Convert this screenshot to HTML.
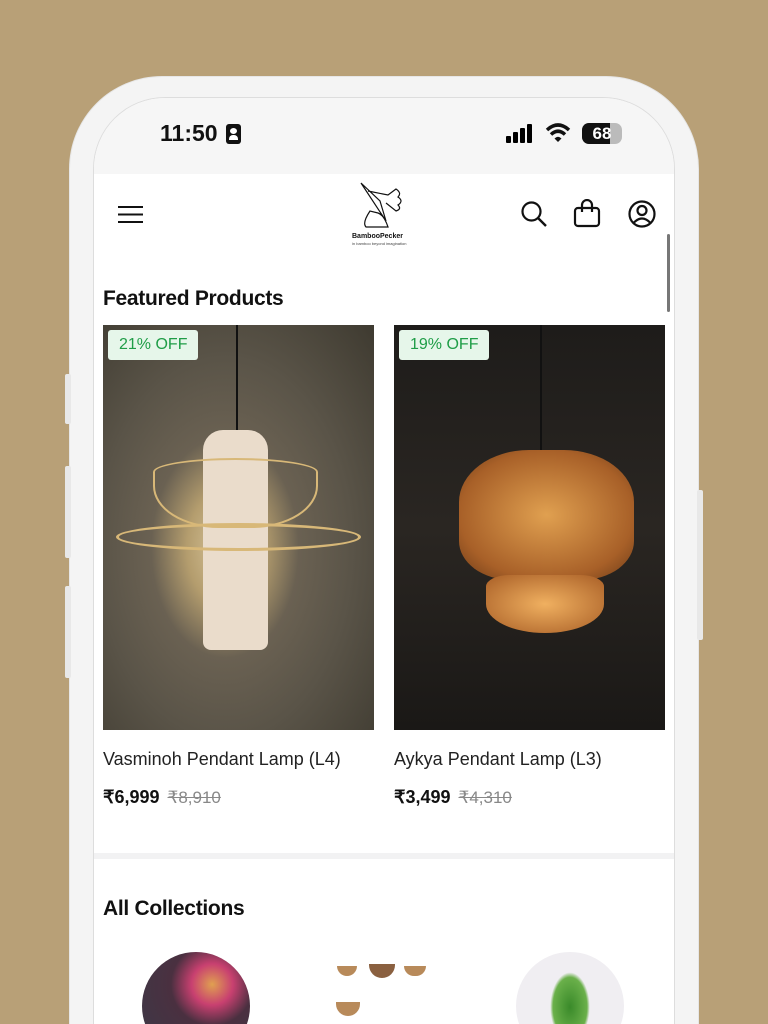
<!DOCTYPE html>
<html><head><meta charset="utf-8"><style>
*{margin:0;padding:0;box-sizing:border-box}
html,body{width:768px;height:1024px;overflow:hidden}
body{background:#b8a077;position:relative;font-family:"Liberation Sans",sans-serif;color:#111}
.frame{position:absolute;left:70px;top:77px;width:628px;height:947px;background:#f4f4f4;border-radius:92px 92px 0 0;box-shadow:0 0 0 1px #e6e6e6}
.btn{position:absolute;background:#e8e8e8;width:6px;border-radius:2px}
.screen{position:absolute;left:93px;top:97px;width:582px;height:927px;background:#fff;border-radius:72px 72px 0 0;overflow:hidden;border:1px solid #ddd;border-bottom:none}
.status{position:absolute;left:0;top:0;width:100%;height:76px;background:#f6f6f6}
.abs{position:absolute}
.badge{position:absolute;left:5px;top:5px;background:#e6f6ea;color:#1f9d47;font-size:16px;padding:6px 11px;border-radius:3px}
.name{font-size:18px;color:#222}
.price{font-size:18px;font-weight:bold}
.old{font-size:17px;color:#888;text-decoration:line-through;margin-left:8px;font-weight:normal}
h2{font-size:21px;font-weight:bold;letter-spacing:-0.3px}
</style></head><body>
<div class="frame"></div>
<div class="btn" style="left:65px;top:374px;height:50px"></div>
<div class="btn" style="left:65px;top:466px;height:92px"></div>
<div class="btn" style="left:65px;top:586px;height:92px"></div>
<div class="btn" style="left:697px;top:490px;height:150px"></div>
<div class="screen">
 <div class="status">
  <div class="abs" style="left:66px;top:22px;font-size:23px;font-weight:bold">11:50</div>
  <div class="abs" style="left:132px;top:26px;width:15px;height:20px;background:#111;border-radius:3px"><div style="position:absolute;left:4px;top:4px;width:7px;height:6px;background:#fff;border-radius:50%"></div><div style="position:absolute;left:3px;top:11px;width:9px;height:5px;background:#fff;border-radius:4px 4px 0 0"></div></div>
  <svg class="abs" style="left:412px;top:26px" width="32" height="20"><rect x="0" y="12" width="5" height="7" rx="1"/><rect x="7" y="8" width="5" height="11" rx="1"/><rect x="14" y="4" width="5" height="15" rx="1"/><rect x="21" y="0" width="5" height="19" rx="1"/></svg>
  <svg class="abs" style="left:451px;top:24px" width="26" height="22"><path d="M2 8 Q13 -2 24 8" stroke="#111" stroke-width="3.5" fill="none"/><path d="M6 12.5 Q13 6 20 12.5" stroke="#111" stroke-width="3.5" fill="none"/><path d="M9.5 16.5 L13 20 L16.5 16.5 Q13 13 9.5 16.5Z" fill="#111"/></svg>
  <div class="abs" style="left:488px;top:25px;width:40px;height:21px;background:#bbb;border-radius:7px;overflow:hidden"><div style="width:28px;height:21px;background:#111"></div><div style="position:absolute;left:0;top:0;width:40px;text-align:center;color:#fff;font-weight:bold;font-size:17px;line-height:21px">68</div></div>
 </div>
 <svg class="abs" style="left:24px;top:107px" width="26" height="20"><path d="M0 2H25M0 9.5H25M0 17H25" stroke="#111" stroke-width="2"/></svg>
 <svg class="abs" style="left:264px;top:83px" width="60" height="50"><path d="M3 2 L28 40 L22 20 Z M10 10 L30 14 L38 8 Q44 12 40 16 Q46 20 40 24 Q44 28 38 30 L28 22 M12 30 Q4 42 8 46 L30 46 Q26 34 20 32 Z" stroke="#111" fill="none" stroke-width="1.2"/></svg>
 <div class="abs" style="left:258px;top:135px;font-size:7px;font-weight:bold">BambooPecker</div>
 <div class="abs" style="left:258px;top:143px;font-size:4px;color:#444">in bamboo beyond imagination</div>
 <svg class="abs" style="left:426px;top:102px" width="30" height="30"><circle cx="11.5" cy="11.5" r="9" stroke="#111" stroke-width="2.2" fill="none"/><path d="M18 18L26 26" stroke="#111" stroke-width="2.4"/></svg>
 <svg class="abs" style="left:479px;top:101px" width="30" height="30"><rect x="2" y="9" width="24" height="18" rx="3" stroke="#111" stroke-width="2.2" fill="none"/><path d="M9 13V6a5 5 0 0 1 10 0v7" stroke="#111" stroke-width="2.2" fill="none"/></svg>
 <svg class="abs" style="left:533px;top:101px" width="30" height="30"><circle cx="15" cy="15" r="12.5" stroke="#111" stroke-width="2.2" fill="none"/><circle cx="15" cy="11.5" r="4.5" stroke="#111" stroke-width="2.2" fill="none"/><path d="M6.5 24 Q15 15 23.5 24" stroke="#111" stroke-width="2.2" fill="none"/></svg>
 <div class="abs" style="left:573px;top:136px;width:3px;height:78px;background:#777;border-radius:2px"></div>
 <h2 class="abs" style="left:9px;top:189px">Featured Products</h2>
 <div class="abs" style="left:9px;top:227px;width:271px;height:405px;background:radial-gradient(ellipse at 45% 55%,#d8c59a 0,#b49d6e 18%,#6a6152 35%,#5a5448 60%,#3e3a30 100%)">
  <div style="position:absolute;left:133px;top:0;width:2px;height:105px;background:#111"></div>
  <div style="position:absolute;left:100px;top:105px;width:65px;height:220px;background:#eadccb;border-radius:20px 20px 8px 8px"></div>
  <div style="position:absolute;left:13px;top:198px;width:245px;height:28px;border:3px solid #d8b878;border-radius:50%"></div>
  <div style="position:absolute;left:50px;top:133px;width:165px;height:70px;border:2px solid #d8b878;border-radius:50% 50% 40% 40%/20% 20% 60% 60%"></div>
  <div class="badge">21% OFF</div>
 </div>
 <div class="abs" style="left:300px;top:227px;width:271px;height:405px;background:linear-gradient(#1e1c1a,#2a2622 50%,#1a1816)">
  <div style="position:absolute;left:146px;top:0;width:2px;height:125px;background:#111"></div>
  <div style="position:absolute;left:65px;top:125px;width:175px;height:130px;background:radial-gradient(#e0a050,#a86028 70%,#6a3a18);border-radius:40% 40% 30% 30%"></div>
  <div style="position:absolute;left:92px;top:250px;width:118px;height:58px;background:radial-gradient(#f0b060,#a85e26);border-radius:20% 20% 50% 50%"></div>
  <div class="badge">19% OFF</div>
 </div>
 <div class="abs name" style="left:9px;top:651px">Vasminoh Pendant Lamp (L4)</div>
 <div class="abs price" style="left:9px;top:689px">₹6,999<span class="old">₹8,910</span></div>
 <div class="abs name" style="left:300px;top:651px">Aykya Pendant Lamp (L3)</div>
 <div class="abs price" style="left:300px;top:689px">₹3,499<span class="old">₹4,310</span></div>
 <div class="abs" style="left:0;top:755px;width:100%;height:6px;background:#f2f2f3"></div>
 <h2 class="abs" style="left:9px;top:799px">All Collections</h2>
 <div class="abs" style="left:48px;top:854px;width:108px;height:108px;border-radius:50%;background:radial-gradient(circle at 65% 30%,#e0a050 0,#c84070 20%,#4a3040 40%,#3a3a48 100%)"></div>
 <div class="abs" style="left:238px;top:858px;width:100px;height:100px;background:#fff"><div style="position:absolute;left:5px;top:10px;width:20px;height:10px;background:#b88a5a;border-radius:0 0 10px 10px"></div><div style="position:absolute;left:37px;top:8px;width:26px;height:14px;background:#8a6040;border-radius:0 0 13px 13px"></div><div style="position:absolute;left:72px;top:10px;width:22px;height:10px;background:#b88a5a;border-radius:0 0 10px 10px"></div><div style="position:absolute;left:4px;top:46px;width:24px;height:14px;background:#b88a5a;border-radius:0 0 12px 12px"></div></div>
 <div class="abs" style="left:422px;top:854px;width:108px;height:108px;border-radius:50%;background:#f0eef2"><div style="position:absolute;left:34px;top:20px;width:40px;height:70px;background:radial-gradient(#3a8a2a,#6ab04a 60%,transparent 70%)"></div></div>
</div>
</body></html>
